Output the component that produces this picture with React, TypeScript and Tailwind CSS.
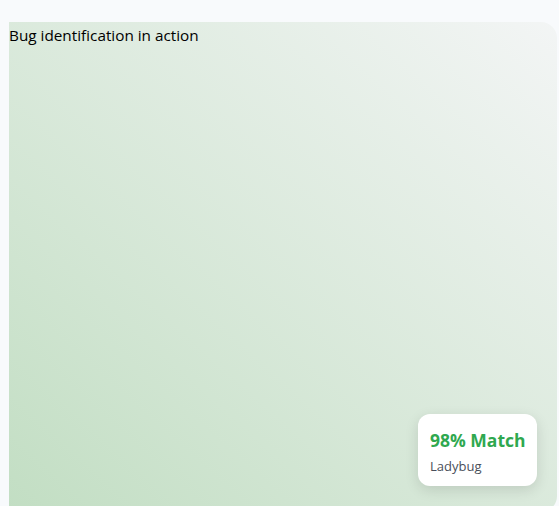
export default function App() {
  return (
    <div className="h-screen overflow-hidden bg-[#f8fafc] pt-[22px] pl-[9px] pr-[2px]" style={{ fontFamily: '"Open Sans", "Noto Sans", sans-serif' }}>
      <div className="relative h-[490px] rounded-r-2xl overflow-hidden bg-gradient-to-tr from-[#c2dec3] to-[#f3f5f5]">
        <p className="text-[15.3px] leading-[26px] text-black">Bug identification in action</p>

        <div className="absolute right-5 bottom-[26px] w-[119px] h-[72px] rounded-xl bg-white px-3 pt-[13px] whitespace-nowrap shadow-[0_4px_14px_rgba(0,0,0,0.12)]">
          <div className="text-[17.5px] leading-[26px] font-bold text-[#2fa84f]">98% Match</div>
          <div className="text-[13px] leading-[20px] mt-[3px] text-[#4a4f5a]">Ladybug</div>
        </div>
      </div>
    </div>
  );
}
